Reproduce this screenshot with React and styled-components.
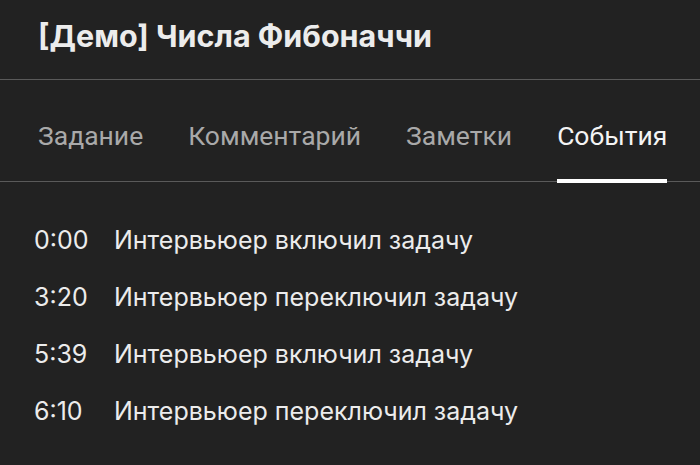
import React from "react";
import styled, { createGlobalStyle } from "styled-components";

const GlobalStyle = createGlobalStyle`
  html, body {
    margin: 0;
    padding: 0;
    background: #222222;
  }
  body {
    font-family: Inter, "Liberation Sans", Arial, sans-serif;
  }
`;

const tabs = ["Задание", "Комментарий", "Заметки", "События"];

const events = [
  { time: "0:00", text: "Интервьюер включил задачу" },
  { time: "3:20", text: "Интервьюер переключил задачу" },
  { time: "5:39", text: "Интервьюер включил задачу" },
  { time: "6:10", text: "Интервьюер переключил задачу" },
];

export default function App() {
  return (
    <>
      <GlobalStyle />
      <Panel>
        <Header>
          <Title>[Демо] Числа Фибоначчи</Title>
        </Header>
        <TabBar>
          {tabs.map((t) => (
            <Tab key={t} active={t === "События"}>
              {t}
            </Tab>
          ))}
        </TabBar>
        <EventList>
          {events.map((e) => (
            <EventRow key={e.time}>
              <Time>{e.time}</Time>
              <EventText>{e.text}</EventText>
            </EventRow>
          ))}
        </EventList>
      </Panel>
    </>
  );
}

const Panel = styled.div`
  width: 700px;
  height: 465px;
  background: #222222;
  display: flex;
  flex-direction: column;
  overflow: hidden;
`;

const Header = styled.div`
  height: 80px;
  box-sizing: border-box;
  padding: 0 38px;
  display: flex;
  align-items: center;
  border-bottom: 1px solid #5a5a5a;
`;

const Title = styled.h1`
  margin: 0;
  margin-top: -8px;
  font-family: Inter, "Liberation Sans", Arial, sans-serif;
  font-size: 30.5px;
  font-weight: 700;
  color: #ececec;
`;

const TabBar = styled.div`
  height: 102px;
  box-sizing: border-box;
  padding: 0 38px;
  display: flex;
  gap: 45px;
  border-bottom: 1px solid #5a5a5a;
`;

const Tab = styled.div`
  display: flex;
  align-items: center;
  padding-top: 11px;
  box-sizing: border-box;
  font-family: Roboto, sans-serif;
  font-size: 26.5px;
  color: ${(p) => (p.active ? "#f4f4f4" : "#a9a9a9")};
  border-bottom: 4px solid ${(p) => (p.active ? "#ffffff" : "transparent")};
  margin-bottom: -2px;
  white-space: nowrap;
`;

const EventList = styled.div`
  display: flex;
  flex-direction: column;
  padding: 44px 34px 0;
  gap: 29px;
`;

const EventRow = styled.div`
  display: flex;
  align-items: center;
  height: 28px;
  font-family: Inter, "Liberation Sans", Arial, sans-serif;
  font-size: 25px;
  color: #ececec;
`;

const Time = styled.span`
  width: 80px;
`;

const EventText = styled.span``;
